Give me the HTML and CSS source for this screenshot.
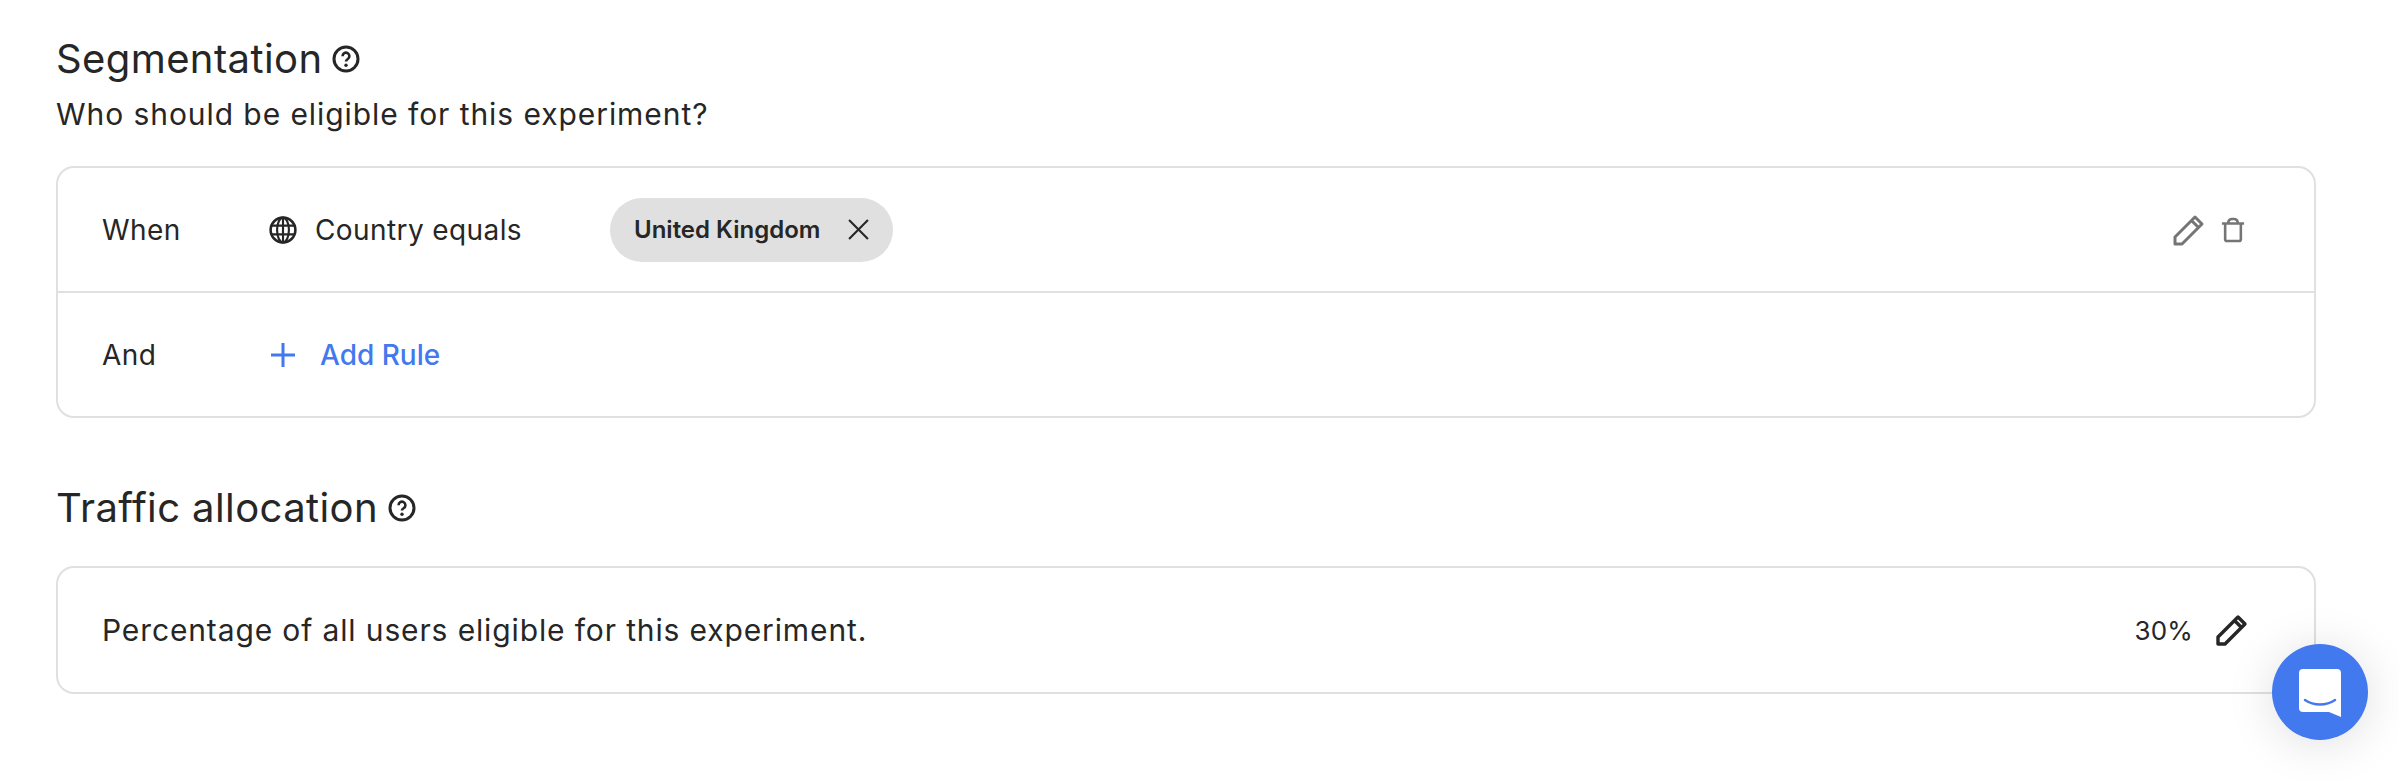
FILE: index.html
```html
<!DOCTYPE html>
<html lang="en">
<head>
<meta charset="utf-8">
<title>Segmentation</title>
<link rel="stylesheet" href="styles.css">
</head>
<body>
<main class="page">
  <section class="section">
    <h2 class="heading"><span>Segmentation</span>
      <svg class="help" viewBox="0 0 28 28"><circle cx="14" cy="14" r="12" fill="none" stroke="currentColor" stroke-width="3"/><path d="M10.600 11.200a3.400 3.400 0 1 1 5.200 2.800c-1.200.8-1.800 1.300-1.800 2.600" fill="none" stroke="currentColor" stroke-width="2.600"/><circle cx="14" cy="20.300" r="1.700" fill="currentColor"/></svg>
    </h2>
    <p class="sub">Who should be eligible for this experiment?</p>
    <div class="card">
      <div class="row">
        <span class="label">When</span>
        <span class="icon-slot">
          <svg class="globe" viewBox="0 0 26 26" fill="none" stroke="currentColor" stroke-width="2"><circle cx="13" cy="13" r="11.500" stroke-width="2.400"/><ellipse cx="13" cy="13" rx="5.500" ry="11.500"/><path d="M13 1.500v23M2.500 9h21M2.500 17h21"/></svg>
        </span>
        <span class="field">Country equals</span>
        <span class="chip">United Kingdom
          <svg class="chip-x" viewBox="0 0 20 20" fill="none" stroke="currentColor" stroke-width="2"><path d="M1 1l18 18M19 1L1 19"/></svg>
        </span>
        <span class="actions">
          <svg class="pencil" viewBox="0 0 32 32" fill="none" stroke="currentColor" stroke-width="3" stroke-linejoin="round"><path d="M2 30v-7L22 3l7 7-20 20zM18.500 6.500l7 7"/></svg>
          <svg class="trash" viewBox="0 0 26 28" fill="none" stroke="currentColor" stroke-width="2.800" stroke-linejoin="round"><path d="M1 7h24M8 7V5a4 4 0 0 1 4-3h2a4 4 0 0 1 4 3v2M4.500 7v17a2 2 0 0 0 2 2h13a2 2 0 0 0 2-2V7"/></svg>
        </span>
      </div>
      <div class="row">
        <span class="label">And</span>
        <span class="icon-slot add">
          <svg class="plus" viewBox="0 0 24 24" fill="none" stroke="currentColor" stroke-width="3"><path d="M12 0v24M0 12h24"/></svg>
        </span>
        <span class="add-text">Add Rule</span>
      </div>
    </div>
  </section>
  <section class="section second">
    <h2 class="heading"><span>Traffic allocation</span>
      <svg class="help" viewBox="0 0 28 28"><circle cx="14" cy="14" r="12" fill="none" stroke="currentColor" stroke-width="3"/><path d="M10.600 11.200a3.400 3.400 0 1 1 5.200 2.800c-1.200.8-1.800 1.300-1.800 2.600" fill="none" stroke="currentColor" stroke-width="2.600"/><circle cx="14" cy="20.300" r="1.700" fill="currentColor"/></svg>
    </h2>
    <div class="card">
      <div class="row row-single">
        <span class="label-wide">Percentage of all users eligible for this experiment.</span>
        <span class="actions percent">
          <span>30%</span>
          <svg class="pencil" viewBox="0 0 32 32" fill="none" stroke="currentColor" stroke-width="3.400" stroke-linejoin="round"><path d="M2 30v-7L22 3l7 7-20 20zM18.500 6.500l7 7"/></svg>
        </span>
      </div>
    </div>
  </section>
</main>
<button class="chat" aria-label="Chat">
  <svg viewBox="0 0 42 48"><path d="M4 0h34a4 4 0 0 1 4 4v44l-12-5H4a4 4 0 0 1-4-4V4a4 4 0 0 1 4-4z" fill="#fff"/><path d="M6 31c9 6 21 6 30 0" fill="none" stroke="#4379ee" stroke-width="2.500" stroke-linecap="round"/></svg>
</button>
</body>
</html>
```
FILE: styles.css
```css
* { box-sizing: border-box; }
html, body { margin: 0; background: #fff; }
body {
  height: 780px;
  overflow: hidden;
  font-family: Inter, "Liberation Sans", sans-serif;
  color: #262626;
}
.page { padding: 34px 82px 0 56px; }
.heading {
  margin: 0;
  display: flex;
  align-items: center;
  gap: 10px;
  font-size: 40px;
  line-height: 50px;
  font-weight: 400;
  letter-spacing: .4px;
}
.help { width: 28px; height: 28px; color: #262626; }
.sub { margin: 10px 0 0; font-size: 30px; line-height: 40px; letter-spacing: .93px; }
.card {
  margin-top: 32px;
  border: 2px solid #e0e0e0;
  border-radius: 18px;
}
.row {
  display: flex;
  align-items: center;
  height: 123px;
  padding: 0 69px 0 44px;
  font-size: 28px;
  letter-spacing: .4px;
}
.row + .row { border-top: 2px solid #e0e0e0; height: 125px; }
.label { width: 167px; }
.label-wide { flex: 1; font-size: 30px; letter-spacing: .87px; }
.icon-slot { width: 46px; display: flex; color: #262626; }
.globe { width: 28px; height: 28px; }
.field { width: 295px; }
.chip {
  display: inline-flex;
  align-items: center;
  gap: 28px;
  height: 64px;
  padding: 0 24px 0 24px;
  border-radius: 32px;
  background: #e0e0e0;
  font-size: 24px;
  font-weight: 600;
  letter-spacing: 0;
}
.chip-x { width: 21px; height: 21px; }
.actions { margin-left: auto; display: flex; align-items: center; gap: 16px; color: #757575; }
.pencil { width: 32px; height: 32px; }
.trash { width: 24px; height: 28px; }
.add { color: #4379ee; width: 51px; padding-left: 2px; }
.plus { width: 24px; height: 24px; }
.add-text { color: #4379ee; font-weight: 500; letter-spacing: 0; }
.second { margin-top: 65px; }
.second .card { margin-top: 33px; }
.row-single { padding-right: 66px; height: 124px; }
.percent { color: #262626; gap: 23px; font-size: 26px; letter-spacing: .2px; }
.chat {
  position: absolute;
  left: 2272px;
  top: 644px;
  width: 96px;
  height: 96px;
  border: 0;
  padding: 0;
  border-radius: 50%;
  background: #4379ee;
  display: flex;
  align-items: center;
  justify-content: center;
  box-shadow: 0 4px 48px rgba(0,0,0,.13);
}
.chat svg { width: 42px; height: 48px; margin-top: 2px; }
```
